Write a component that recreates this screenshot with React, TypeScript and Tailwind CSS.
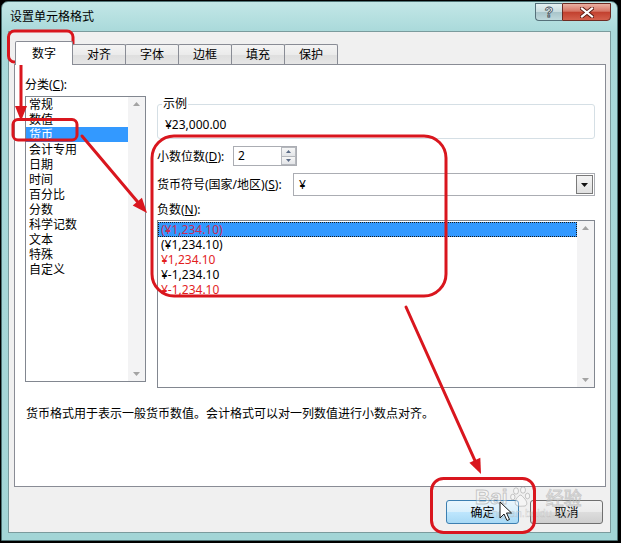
import React from 'react'

const CATEGORIES = ['常规', '数值', '货币', '会计专用', '日期', '时间', '百分比', '分数', '科学记数', '文本', '特殊', '自定义']

const NEGATIVES = [
  { text: '(¥1,234.10)', red: true },
  { text: '(¥1,234.10)', red: false },
  { text: '¥1,234.10', red: true },
  { text: '¥-1,234.10', red: false },
  { text: '¥-1,234.10', red: true },
]

const TABS = ['对齐', '字体', '边框', '填充', '保护']

const RED = '#d9161e'

// small triangle used by scrollbars / spinner / combo
function Tri({ up, color = '#8f8f8f', w = 7, h = 4 }: { up?: boolean; color?: string; w?: number; h?: number }) {
  const pts = up ? `0,${h} ${w / 2},0 ${w},${h}` : `0,0 ${w},0 ${w / 2},${h}`
  return (
    <svg width={w} height={h} viewBox={`0 0 ${w} ${h}`} className="block">
      <polygon points={pts} fill={color} />
    </svg>
  )
}

function Scrollbar() {
  return (
    <div className="w-[17px] h-full bg-[#f3f3f4] flex flex-col items-center justify-between py-[5px]">
      <Tri up color="#a3a3a3" />
      <Tri color="#a3a3a3" />
    </div>
  )
}

function head(x1: number, y1: number, x2: number, y2: number, len = 15, half = 6) {
  const dx = x2 - x1
  const dy = y2 - y1
  const l = Math.hypot(dx, dy)
  const ux = dx / l
  const uy = dy / l
  const bx = x2 - ux * len
  const by = y2 - uy * len
  return {
    bx,
    by,
    pts: `${x2},${y2} ${bx - uy * half},${by + ux * half} ${bx + uy * half},${by - ux * half}`,
  }
}

function Arrow({ x1, y1, x2, y2 }: { x1: number; y1: number; x2: number; y2: number }) {
  const h = head(x1, y1, x2, y2)
  return (
    <g>
      <line x1={x1} y1={y1} x2={h.bx} y2={h.by} stroke={RED} strokeWidth={3} strokeLinecap="round" />
      <polygon points={h.pts} fill={RED} />
    </g>
  )
}

function Annotations() {
  return (
    <svg className="absolute inset-0 pointer-events-none" width={621} height={543} viewBox="0 0 621 543">
      <rect x={8.5} y={31} width={64.5} height={31} rx={6} fill="none" stroke={RED} strokeWidth={3} />
      <Arrow x1={21} y1={62} x2={21} y2={121} />
      <rect x={13} y={119.5} width={64} height={20.5} rx={5} fill="none" stroke={RED} strokeWidth={3} />
      <Arrow x1={82} y1={136} x2={147} y2={213} />
      <rect x={152} y={136} width={294} height={160} rx={22} fill="none" stroke={RED} strokeWidth={3} />
      <Arrow x1={406} y1={307} x2={481} y2={474} />
      <rect x={431.5} y={478.5} width={103} height={54} rx={12} fill="none" stroke={RED} strokeWidth={3} />
      {/* mouse cursor */}
      <polygon
        points="500,502 500,518 504,514 507,520.5 509.5,519.5 506.5,513 511.5,513"
        fill="#ffffff"
        stroke="#1a1a1a"
        strokeWidth={1}
        strokeLinejoin="round"
      />
    </svg>
  )
}

function Watermark() {
  return (
    <div className="absolute left-[475px] top-[486px] pointer-events-none flex flex-col items-start">
      <div className="flex items-center gap-[2px]">
        <span className="text-[21px] font-bold leading-[22px] font-['Liberation_Sans',sans-serif] text-white/40 [-webkit-text-stroke:1px_rgba(140,140,140,0.45)]">
          Bai
        </span>
        <svg width={22} height={22} viewBox="0 0 22 22">
          <g fill="rgba(255,255,255,0.35)" stroke="rgba(140,140,140,0.45)" strokeWidth={1}>
            <ellipse cx={6} cy={5} rx={2.5} ry={3.2} />
            <ellipse cx={13} cy={4} rx={2.5} ry={3.2} />
            <ellipse cx={2.8} cy={11} rx={2.2} ry={2.8} />
            <ellipse cx={17.5} cy={10} rx={2.2} ry={2.8} />
            <path d="M10 9 C6 12 4 16 6 19 C8 21 12 20 15 20 C18 19 17 15 14 12 C12.5 10.5 11.5 8.8 10 9 Z" />
          </g>
        </svg>
        <span className="ml-[12px] text-[18px] leading-[22px] font-['Noto_Sans_CJK_SC',sans-serif] text-white/40 [-webkit-text-stroke:1px_rgba(140,140,140,0.4)]">
          经验
        </span>
      </div>
      <span className="ml-[12px] -mt-[1px] text-[11px] leading-[12px] font-['Liberation_Sans',sans-serif] text-white/40 [-webkit-text-stroke:0.5px_rgba(140,140,140,0.35)]">
        jingyan.baidu.com
      </span>
    </div>
  )
}

export default function App() {
  return (
    <div className="relative w-[621px] h-[543px] bg-black overflow-hidden font-['Noto_Sans','Noto_Sans_CJK_SC',sans-serif] text-[12px] leading-[15px] text-black">
      {/* window frame */}
      <div className="ml-[1px] mt-[1px] w-[617px] h-[540px] rounded-t-[7px] border border-[#4f7476] bg-[linear-gradient(180deg,#c3e7e7_0px,#a9d9da_30px,#a3d5d6_100%)] flex flex-col px-[6px] pb-[7px]">
        {/* title bar */}
        <div className="h-[29px] shrink-0 flex items-start justify-between">
          <span className="mt-[6px] ml-[2px] text-[12px] leading-[16px] font-['Noto_Sans_CJK_SC',sans-serif]">设置单元格格式</span>
          <div className="flex mt-[1px]">
            <div className="w-[27px] h-[18px] border border-[#55707a] border-r-0 rounded-bl-[4px] bg-[linear-gradient(180deg,#e6f1f2_0%,#c9dde0_48%,#a9c5ca_52%,#bfd9dc_100%)] flex items-center justify-center">
              <span className="text-[14px] leading-[14px] font-bold font-['Liberation_Sans',sans-serif] text-white [-webkit-text-stroke:0.8px_#3c4b55]">?</span>
            </div>
            <div className="w-[49px] h-[18px] border border-[#6e2a22] rounded-br-[4px] bg-[linear-gradient(180deg,#eab0a2_0%,#d77666_45%,#c2412f_52%,#d4604c_100%)] flex items-center justify-center">
              <svg width={14} height={11} viewBox="0 0 14 11">
                <path d="M2 1.5 L12 9.5 M12 1.5 L2 9.5" stroke="#5a1a12" strokeWidth={4} strokeLinecap="square" />
                <path d="M2 1.5 L12 9.5 M12 1.5 L2 9.5" stroke="#ffffff" strokeWidth={2.2} strokeLinecap="square" />
              </svg>
            </div>
          </div>
        </div>

        {/* client area */}
        <div className="flex-1 bg-[#f0f0f0] border border-[#7b9b9d] flex flex-col pl-[5px] pr-[4px] pt-[9px]">
          {/* tabs */}
          <div className="flex items-end pl-[1px] h-[23px] relative z-10">
            <div className="w-[58px] h-[24px] -mb-px bg-white border border-[#898c95] border-b-0 rounded-t-[2px] flex items-center justify-center pb-[1px]">
              数字
            </div>
            {TABS.map((t) => (
              <div
                key={t}
                className="w-[54px] h-[20px] -ml-px first:ml-0 border border-[#898c95] border-b-0 rounded-t-[2px] bg-[linear-gradient(180deg,#f4f4f4_0%,#ebebeb_50%,#dedede_51%,#e6e6e6_100%)] flex items-center justify-center"
              >
                {t}
              </div>
            ))}
          </div>

          {/* tab panel */}
          <div className="h-[423px] bg-white border border-[#898c95] flex flex-col">
            <div className="flex items-start pt-[12px] pl-[10px]">
              {/* left: categories */}
              <div className="flex flex-col">
                <span>
                  分类(<u>C</u>):
                </span>
                <div className="mt-[4px] w-[121px] h-[286px] border border-[#828790] bg-white flex">
                  <div className="flex-1 flex flex-col">
                    {CATEGORIES.map((c) => (
                      <div
                        key={c}
                        className={`h-[15px] pl-[3px] leading-[15px] ${c === '货币' ? 'bg-[#3399ff] text-white' : ''}`}
                      >
                        {c}
                      </div>
                    ))}
                  </div>
                  <Scrollbar />
                </div>
              </div>

              {/* right: options */}
              <div className="ml-[11px] mt-[20px] w-[438px] flex flex-col">
                <fieldset className="h-[42px] border border-[#d5dfe5] rounded-[3px]">
                  <legend className="ml-[4px] px-[1px] leading-[14px]">示例</legend>
                  <div className="pt-[6px] pl-[7px]">¥23,000.00</div>
                </fieldset>

                <div className="mt-[7px] h-[20px] flex items-center">
                  <span className="w-[76px]">
                    小数位数(<u>D</u>):
                  </span>
                  <div className="w-[64px] h-[20px] border border-[#abadb3] bg-white flex">
                    <div className="flex-1 pl-[4px] leading-[18px]">2</div>
                    <div className="w-[15px] flex flex-col">
                      <div className="flex-1 border border-[#b5b8bd] bg-[linear-gradient(180deg,#f7f7f7,#e3e5e8)] flex items-center justify-center">
                        <Tri up color="#5a6b86" w={5} h={3} />
                      </div>
                      <div className="flex-1 border border-t-0 border-[#b5b8bd] bg-[linear-gradient(180deg,#f7f7f7,#e3e5e8)] flex items-center justify-center">
                        <Tri color="#5a6b86" w={5} h={3} />
                      </div>
                    </div>
                  </div>
                </div>

                <div className="mt-[7px] h-[23px] flex items-center">
                  <span className="w-[136px]">
                    货币符号(国家/地区)(<u>S</u>):
                  </span>
                  <div className="flex-1 h-[23px] border border-[#abadb3] bg-white flex items-center">
                    <div className="flex-1 pl-[5px]">¥</div>
                    <div className="w-[17px] h-[19px] mr-[1px] border border-[#7a7a7a] bg-[linear-gradient(180deg,#f4f4f4,#e0e0e0)] flex items-center justify-center">
                      <Tri color="#111111" w={7} h={4} />
                    </div>
                  </div>
                </div>

                <span className="mt-[6px]">
                  负数(<u>N</u>):
                </span>
                <div className="mt-[3px] h-[168px] border border-[#828790] bg-white flex">
                  <div className="flex-1 flex flex-col pt-[1px]">
                    {NEGATIVES.map((n, i) => (
                      <div
                        key={i}
                        className={`h-[15px] pl-[3px] leading-[15px] ${
                          i === 0
                            ? 'bg-[#3399ff] text-[#c82c55] outline-1 outline-dotted outline-[#1a1a1a] -outline-offset-1'
                            : n.red
                              ? 'text-[#e31e1e]'
                              : ''
                        }`}
                      >
                        {n.text}
                      </div>
                    ))}
                  </div>
                  <Scrollbar />
                </div>
              </div>
            </div>

            <p className="mt-[18px] pl-[11px] leading-[16px]">
              货币格式用于表示一般货币数值。会计格式可以对一列数值进行小数点对齐。
            </p>
          </div>

          {/* dialog buttons */}
          <div className="mt-[13px] flex justify-end gap-[11px] pr-[3px]">
            <div className="w-[73px] h-[24px] rounded-[3px] border border-[#3c7fb1] bg-[linear-gradient(180deg,#eaf6fd_0%,#d9f0fc_50%,#bee6fd_51%,#a7d9f5_100%)] flex items-center justify-center">
              确定
            </div>
            <div className="w-[73px] h-[24px] rounded-[3px] border border-[#707070] bg-[linear-gradient(180deg,#f2f2f2_0%,#ebebeb_50%,#dddddd_51%,#cfcfcf_100%)] flex items-center justify-center">
              取消
            </div>
          </div>
        </div>
      </div>

      <Watermark />
      <Annotations />
    </div>
  )
}
